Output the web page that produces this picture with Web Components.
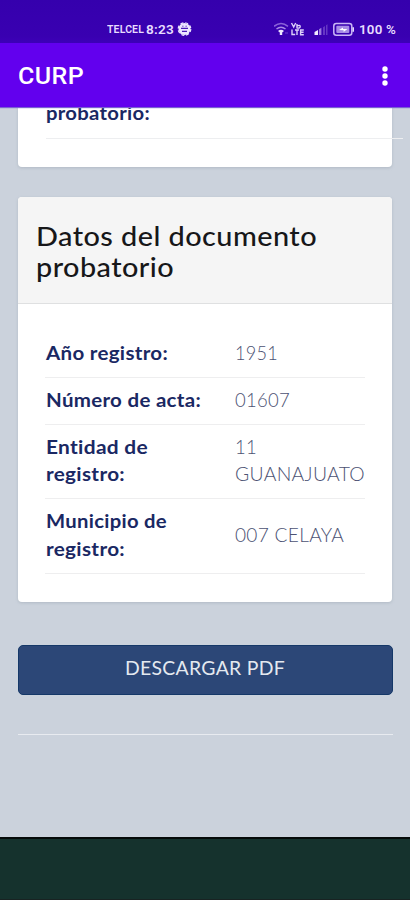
<!DOCTYPE html>
<html lang="es">
<head>
<meta charset="utf-8">
<title>CURP</title>
<style>
html,body{margin:0;height:100%;overflow:hidden}
body{font-family:Lato,"Open Sans",sans-serif}
</style>
</head>
<body>
<curp-app></curp-app>
<script>
const define = (name, html, setup) => customElements.define(name, class extends HTMLElement {
  connectedCallback() {
    if (this.shadowRoot) return;
    this.attachShadow({mode: 'open'}).innerHTML = html;
    if (setup) setup(this);
  }
});

/* A line of text whose letters are widened to span the width in its attribute. */
define('text-line', `<style>:host{display:block;white-space:nowrap}span{display:inline-block;vertical-align:top;transform-origin:0 50%;font-variant-ligatures:none;letter-spacing:.015em}</style><span><slot></slot></span>`, el => {
  const span = el.shadowRoot.querySelector('span');
  const want = parseFloat(el.getAttribute('width'));
  const natural = span.getBoundingClientRect().width;
  if (want && natural) {
    span.style.transform = `scaleX(${want / natural})`;
    el.style.width = want + 'px';
  }
});

define('status-bar', `<style>
:host{display:flex;align-items:center;height:43px;box-sizing:border-box;padding:14px 14px 0 107px;background:linear-gradient(#3500ad,#3900b1 85%,#3d00b8);color:#e7dcff;font:600 13.5px/16px Roboto,sans-serif}
.carrier{font-size:10.5px;margin:2px 2px 0 0}.gear{margin-left:3px}.right{display:flex;align-items:center;margin-left:auto}svg{display:block}
</style>
<text-line class="carrier" width="37">TELCEL</text-line><text-line width="28">8:23</text-line>
<svg class="gear" width="15" height="16" viewBox="0 0 15 16"><circle cx="7.5" cy="8" r="6" fill="#ece5ff"/><circle cx="7.5" cy="8" r="6.3" fill="none" stroke="#ece5ff" stroke-width="1.2" stroke-dasharray="3 1.95"/><path d="M4 7.3h7M5 10.3h5" stroke="#4a19b7" stroke-width="1.3"/><path d="M5.2 5.2h1.3M8.5 5.2h1.3" stroke="#5b30c0"/></svg>
<div class="right">
<svg width="80" height="18" viewBox="0 0 80 18">
<g fill="none" stroke="#8b62d9" stroke-width="1.5"><path d="M0 6.3Q7 .8 14 6.3"/><path d="M2.5 9Q7 5.4 11.5 9" stroke="#a98be5"/></g><path d="M4 11Q7 8.5 10 11L8.2 12.4V15H5.8v-2.6Z" fill="#eee7ff"/><path d="M11 13h3" stroke="#6e40cd"/>
<g fill="none" stroke="#ddd0fa" stroke-width="1.4"><path d="m17.5 3 2.2 4 2-4M23 8.5V4M23 6q3.2-1.5 3.2.5T23 8M18 9.5v5h3.2M21 10h4M23 10v5M29.8 10h-3.2v4.8h3.2M26.6 12.3h3"/></g>
<path d="M40.5 15v-3l3.5-2v5Z" fill="#f2ecff"/><path d="M45 15V9.3l2.4-1.5V15Z" fill="#9c78df"/><path d="M49 15V7.2l2-1.3V15Zm3 0V5.2l1.5-1V15Z" fill="#6536c4"/>
<rect x="59.8" y="3.5" width="18" height="11.7" rx="2.5" fill="none" stroke="#cab5f6" stroke-width="1.5"/><path d="M79.5 7.3v4.4" stroke="#e5d9ff" stroke-width="2.2"/><rect x="62.3" y="5.8" width="13" height="7.1" rx="1" fill="#a88be6"/><path d="m65 10.1 4-2.7V9h4.4L69.6 12v-1.7Z" fill="#fff"/>
</svg>
<text-line width="37" style="margin-left:5px">100 %</text-line>
</div>`);

define('app-bar', `<style>
:host{display:flex;align-items:center;justify-content:space-between;height:64px;box-sizing:border-box;padding:2px 22px 0 18px;background:#6200ee;color:#fff;font:500 24px/30px Roboto,sans-serif;box-shadow:0 1px 1px #7961d0;position:relative;z-index:1}
svg{display:block}</style>
<text-line width="66"><slot></slot></text-line><svg width="6" height="20" viewBox="0 0 6 20" fill="#fff"><circle cx="3" cy="3" r="2.7"/><circle cx="3" cy="10" r="2.7"/><circle cx="3" cy="17" r="2.7"/></svg>`);

define('data-card', `<style>
:host{display:flex;flex-direction:column;box-sizing:border-box;background:#fff;border-radius:4px;box-shadow:0 1px 3px #8d98a466;overflow:hidden}
</style><slot name="header"></slot><slot></slot>`);

define('card-header', `<style>
:host{display:block;height:107px;box-sizing:border-box;padding:24px 18px 0;background:#f5f5f5;border-bottom:1px solid #dfe0e1;color:#171719;font:500 27px/30.5px Lato,sans-serif}
</style><slot></slot>`);

define('data-row', `<style>
:host{display:grid;grid-template-columns:189px 1fr;align-items:center;box-sizing:border-box;padding:8.25px 0 10.25px;border-bottom:1px solid #eeeeef;margin:0 27px;font:19px/27.5px Lato,sans-serif}
.label{padding-left:1px;font-weight:700;color:#1a2863}.value{padding-left:1px;font-weight:300;color:#4c5273}
</style><div class="label"><slot name="label"></slot></div><div class="value"><slot name="value"></slot></div>`);

define('pdf-button', `<style>
:host{display:block}button{display:flex;justify-content:center;align-items:center;width:100%;height:50px;padding:0 1px 6px 0;border:1px solid #153868;border-radius:5px;background:#2c4777;color:#e4e9f0;font:400 20px/28px Lato,sans-serif}
</style><button><text-line width="160"><slot></slot></text-line></button>`);

define('curp-app', `<style>
:host{display:flex;flex-direction:column;height:900px;width:410px;overflow:hidden;background:#cbd2dc}
main{height:730px;box-sizing:border-box;padding:0 17px 0 18px;display:flex;flex-direction:column}
.previous{height:60px;flex:none;overflow:visible;margin-right:1px;border-radius:0 0 4px 4px}
.previous text-line{margin:-8px 0 0 28px;font:700 19px/27.5px Lato,sans-serif;color:#1a2863}
.rule{height:1px;background:#edeef0;margin:11.5px -11px 0 28px}
.document{height:405px;flex:none;margin:30px 1px 43px 0}
.rows{padding-top:26.5px}
hr{width:100%;height:1px;border:0;margin:39px 0 0;background:#e8ebf0}
footer{flex:1;background:#15322d;border-top:2px solid #050b0a;border-bottom:1px solid #182322}
</style>
<status-bar></status-bar>
<app-bar>CURP</app-bar>
<main>
<data-card class="previous"><text-line width="104">probatorio:</text-line><div class="rule"></div></data-card>
<data-card class="document">
<card-header slot="header"><text-line width="281">Datos del documento</text-line><text-line width="138">probatorio</text-line></card-header>
<div class="rows">
<data-row><text-line slot="label" width="122">Año registro:</text-line><text-line slot="value" width="43">1951</text-line></data-row>
<data-row><text-line slot="label" width="155">Número de acta:</text-line><text-line slot="value" width="55">01607</text-line></data-row>
<data-row><div slot="label"><text-line width="102">Entidad de</text-line><text-line width="79">registro:</text-line></div><div slot="value"><text-line width="22">11</text-line><text-line width="130">GUANAJUATO</text-line></div></data-row>
<data-row><div slot="label"><text-line width="121">Municipio de</text-line><text-line width="79">registro:</text-line></div><text-line slot="value" width="109">007 CELAYA</text-line></data-row>
</div>
</data-card>
<pdf-button>DESCARGAR PDF</pdf-button>
<hr>
</main>
<footer></footer>`);
</script>
</body>
</html>
